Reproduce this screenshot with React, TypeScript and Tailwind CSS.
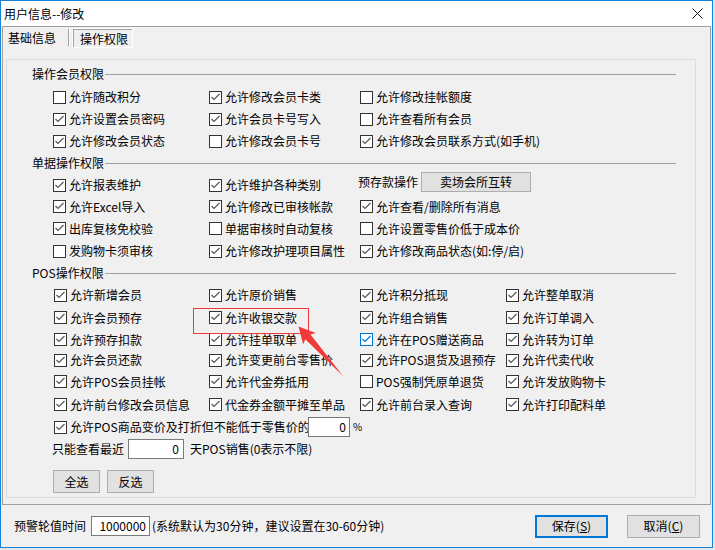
import React from "react";

type Item = { t: string; on: boolean; hover?: boolean };

// 操作会员权限
const memberRows: Item[][] = [
  [
    { t: "允许随改积分", on: false },
    { t: "允许修改会员卡类", on: true },
    { t: "允许修改挂帐额度", on: false },
  ],
  [
    { t: "允许设置会员密码", on: true },
    { t: "允许会员卡号写入", on: true },
    { t: "允许查看所有会员", on: false },
  ],
  [
    { t: "允许修改会员状态", on: true },
    { t: "允许修改会员卡号", on: false },
    { t: "允许修改会员联系方式(如手机)", on: true },
  ],
];

// 单据操作权限 (first row third column is the 预存款操作 button)
const billRows: { h: string; items: Item[] }[] = [
  { h: "h-[22px]", items: [{ t: "允许报表维护", on: true }, { t: "允许维护各种类别", on: true }] },
  {
    h: "h-[21px]",
    items: [
      { t: "允许Excel导入", on: true },
      { t: "允许修改已审核帐款", on: true },
      { t: "允许查看/删除所有消息", on: true },
    ],
  },
  {
    h: "h-[23px]",
    items: [
      { t: "出库复核免校验", on: true },
      { t: "单据审核时自动复核", on: false },
      { t: "允许设置零售价低于成本价", on: false },
    ],
  },
  {
    h: "h-[22px]",
    items: [
      { t: "发购物卡须审核", on: false },
      { t: "允许修改护理项目属性", on: true },
      { t: "允许修改商品状态(如:停/启)", on: true },
    ],
  },
];

const posRows: { h: string; items: Item[] }[] = [
  {
    h: "h-[22px]",
    items: [
      { t: "允许新增会员", on: true },
      { t: "允许原价销售", on: true },
      { t: "允许积分抵现", on: true },
      { t: "允许整单取消", on: true },
    ],
  },
  {
    h: "h-[23px]",
    items: [
      { t: "允许会员预存", on: true },
      { t: "允许收银交款", on: true },
      { t: "允许组合销售", on: true },
      { t: "允许订单调入", on: true },
    ],
  },
  {
    h: "h-[21px]",
    items: [
      { t: "允许预存扣款", on: true },
      { t: "允许挂单取单", on: true },
      { t: "允许在POS赠送商品", on: true, hover: true },
      { t: "允许转为订单", on: true },
    ],
  },
  {
    h: "h-[20px]",
    items: [
      { t: "允许会员还款", on: true },
      { t: "允许变更前台零售价", on: true },
      { t: "允许POS退货及退预存", on: true },
      { t: "允许代卖代收", on: true },
    ],
  },
  {
    h: "h-[23px]",
    items: [
      { t: "允许POS会员挂帐", on: true },
      { t: "允许代金券抵用", on: true },
      { t: "POS强制凭原单退货", on: false },
      { t: "允许发放购物卡", on: true },
    ],
  },
  {
    h: "h-[23px]",
    items: [
      { t: "允许前台修改会员信息", on: true },
      { t: "代金券金额平摊至单品", on: true },
      { t: "允许前台录入查询", on: true },
      { t: "允许打印配料单", on: true },
    ],
  },
];

function Box({ on, hover }: { on: boolean; hover?: boolean }) {
  return (
    <span
      className={`flex h-[13px] w-[13px] shrink-0 items-center justify-center border bg-white ${
        hover ? "border-[#0078d7]" : "border-[#333333]"
      }`}
    >
      {on && (
        <svg width="11" height="11" viewBox="0 0 11 11">
          <path
            d="M1.5 5 L4 7.5 L9.5 2"
            fill="none"
            stroke={hover ? "#0078d7" : "#555555"}
            strokeWidth="1.2"
          />
        </svg>
      )}
    </span>
  );
}

function Check({ item }: { item: Item }) {
  return (
    <div className="flex items-center gap-[3px] whitespace-nowrap">
      <Box on={item.on} hover={item.hover} />
      <span>{item.t}</span>
    </div>
  );
}

function Legend({ title, h }: { title: string; h: string }) {
  return (
    <div className={`flex items-center pl-[25px] pr-[19px] ${h}`}>
      <span className="whitespace-nowrap">{title}</span>
      <span className="ml-px h-px flex-1 bg-[#a0a0a0]" />
    </div>
  );
}

function Btn({ children, className = "" }: { children: React.ReactNode; className?: string }) {
  return (
    <div
      className={`flex items-center justify-center border border-[#adadad] bg-[#e1e1e1] ${className}`}
    >
      {children}
    </div>
  );
}

export default function App() {
  return (
    <div className="relative h-[550px] w-[715px] overflow-hidden bg-[#e6e6e6] font-['Noto_Sans_CJK_SC','Noto_Sans',sans-serif] text-[12px] leading-[14px] text-black">
      <div className="flex h-[548px] w-[713px] flex-col border border-[#1883d7] bg-[#f0f0f0]">
        {/* title bar */}
        <div className="flex h-[25px] shrink-0 items-center justify-between bg-white pl-[3px] pr-[9px]">
          <span>用户信息--修改</span>
          <svg width="11" height="11" viewBox="0 0 11 11">
            <path d="M0.5 0.5 L10.5 10.5 M10.5 0.5 L0.5 10.5" stroke="#111" strokeWidth="1" />
          </svg>
        </div>

        {/* page control */}
        <div className="mx-px h-[479px] shrink-0 border border-[#a0a0a0]">
          <div className="flex h-[21px] items-center pl-[5px]">
            <span>基础信息</span>
            <span className="ml-[12px] h-[17px] w-px bg-[#a0a0a0]" />
            <span className="h-[17px] w-px bg-white" />
            <div className="ml-[2px] mt-px h-[20px] w-[61px] border border-white">
              <div className="flex h-full items-center border-l border-t border-[#a0a0a0] pl-[6px]">
                操作权限
              </div>
            </div>
          </div>

          <div className="ml-[3px] mt-[11px] h-[439px] w-[690px] border border-[#dcdcdc] pt-[4px]">
            <Legend title="操作会员权限" h="h-[20px]" />
            <div className="mt-[2px]">
              {memberRows.map((row, i) => (
                <div key={i} className="grid h-[22px] grid-cols-[156px_151px_1fr] items-center pl-[46px]">
                  {row.map((it) => (
                    <Check key={it.t} item={it} />
                  ))}
                </div>
              ))}
            </div>

            <Legend title="单据操作权限" h="h-[22px]" />
            {billRows.map((row, i) => (
              <div key={i} className={`grid grid-cols-[156px_151px_1fr] items-center pl-[46px] ${row.h}`}>
                {row.items.map((it) => (
                  <Check key={it.t} item={it} />
                ))}
                {i === 0 && (
                  <div className="-ml-[2px] -mt-[2px] flex h-[20px] items-center self-start">
                    <span className="whitespace-nowrap">预存款操作</span>
                    <Btn className="ml-[3px] h-[20px] w-[110px]">卖场会所互转</Btn>
                  </div>
                )}
              </div>
            ))}

            <Legend title="POS操作权限" h="h-[22px]" />
            {posRows.map((row, i) => (
              <div
                key={i}
                className={`grid grid-cols-[155px_151px_146px_1fr] items-center pl-[47px] ${row.h}`}
              >
                {row.items.map((it) => (
                  <Check key={it.t} item={it} />
                ))}
              </div>
            ))}

            <div className="flex h-[22px] items-center pl-[47px]">
              <Box on />
              <span className="ml-[3px] w-[234px] whitespace-nowrap">允许POS商品变价及打折但不能低于零售价的</span>
              <div className="ml-[4px] flex h-[20px] w-[42px] items-center justify-end border border-[#7a7a7a] bg-white pr-[3px]">
                0
              </div>
              <span className="ml-[3px] text-[10px]">%</span>
            </div>

            <div className="flex h-[22px] items-center pl-[45px]">
              <span className="w-[72px] whitespace-nowrap">只能查看最近</span>
              <div className="ml-[4px] flex h-[20px] w-[56px] items-center justify-end border border-[#7a7a7a] bg-white pr-[4px]">
                0
              </div>
              <span className="ml-[6px] whitespace-nowrap">天POS销售(0表示不限)</span>
            </div>

            <div className="mt-[10px] flex gap-[7px] pl-[46px]">
              <Btn className="h-[23px] w-[47px]">全选</Btn>
              <Btn className="h-[23px] w-[47px]">反选</Btn>
            </div>
          </div>
        </div>

        {/* bottom bar */}
        <div className="flex flex-1 items-center pl-[13px] pr-[12px]">
          <span className="w-[72px] whitespace-nowrap">预警轮值时间</span>
          <div className="ml-[5px] flex h-[20px] w-[59px] items-center justify-end border border-[#7a7a7a] bg-white pr-[3px]">
            1000000
          </div>
          <span className="ml-[2px] whitespace-nowrap">(系统默认为30分钟，建议设置在30-60分钟)</span>
          <div className="ml-auto flex gap-[19px]">
            <div className="flex h-[23px] w-[73px] items-center justify-center border-2 border-[#0078d7] bg-[#e1e1e1]">
              保存(<span className="underline">S</span>)
            </div>
            <Btn className="h-[23px] w-[73px]">
              取消(<span className="underline">C</span>)
            </Btn>
          </div>
        </div>
      </div>

      {/* annotation overlay */}
      <div className="absolute left-[193px] top-[308px] h-[26px] w-[116px] border border-[#f03a3a]" />
      <svg className="absolute left-0 top-0" width="715" height="550" viewBox="0 0 715 550">
        <polygon
          points="298.5,326.5 315.8,333.1 310.5,334.6 343,376 305.3,339.2 303.2,344.5"
          fill="#f03a3a"
        />
      </svg>
    </div>
  );
}
